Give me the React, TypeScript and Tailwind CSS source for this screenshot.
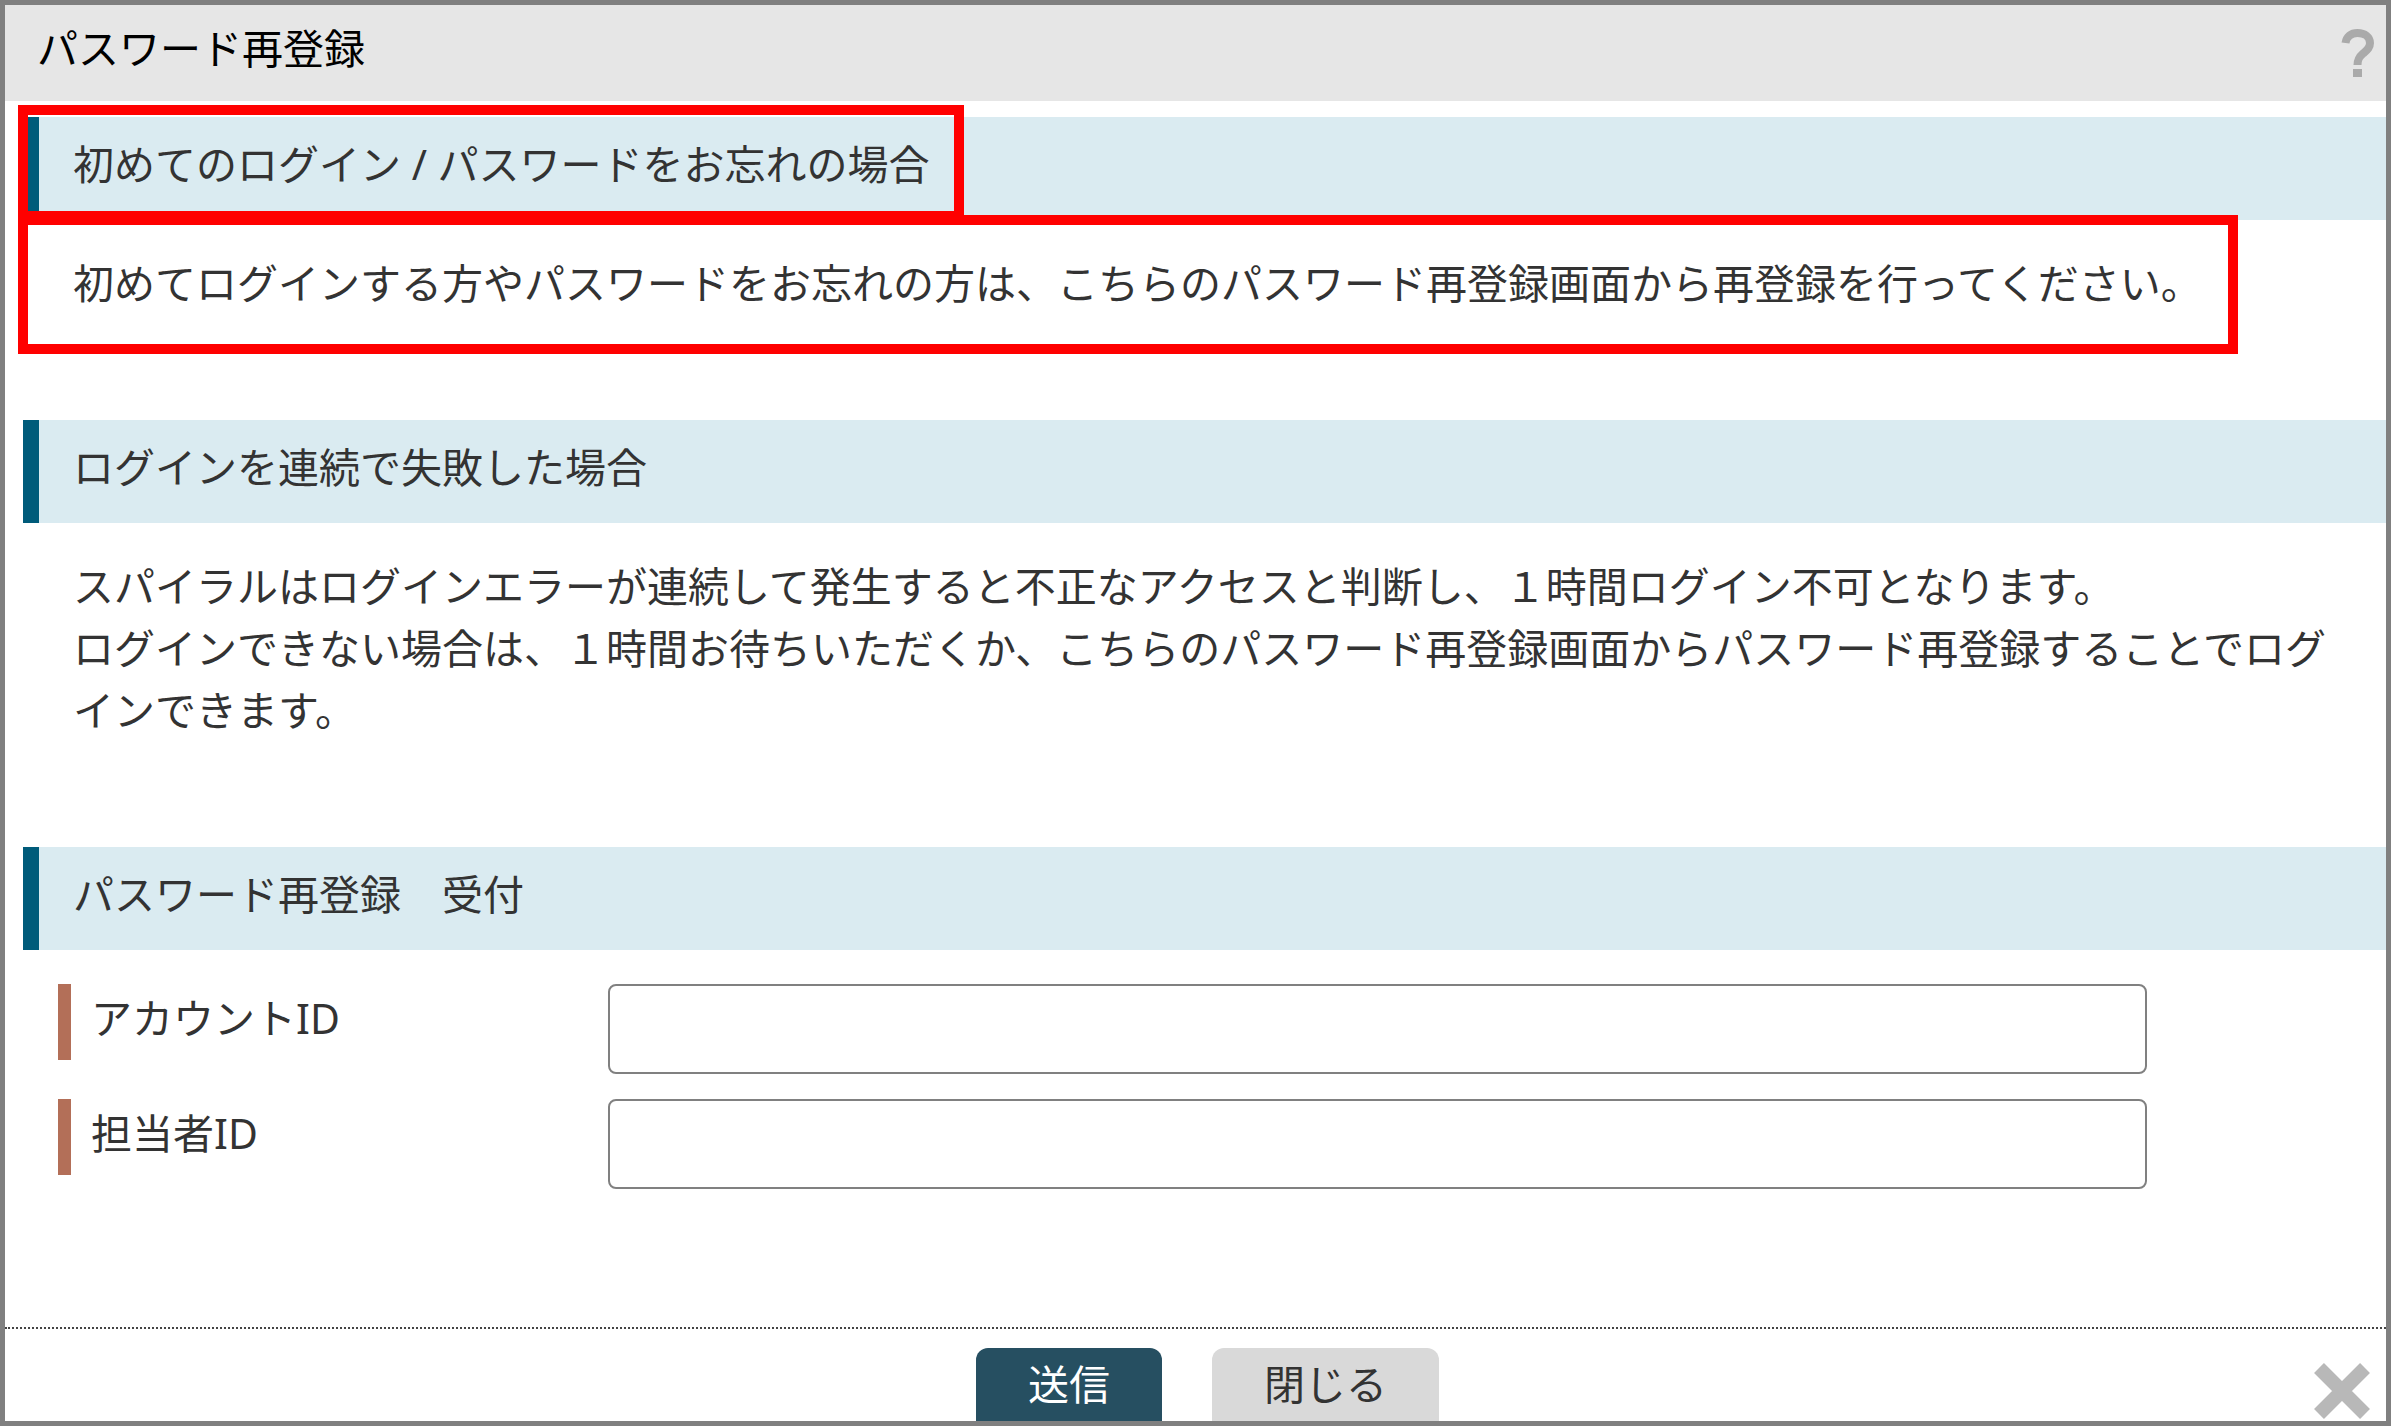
import { useState, type FormEvent, type ReactNode } from 'react';

function HelpIcon() {
  return (
    <svg width="36" height="50" viewBox="0 0 36 50" fill="none">
      <path
        d="M5.5 15C6.5 8.5 11 5 17.5 5C25 5 30 9 30 15C30 20.5 26.5 22.5 23 25.5C19.5 28.5 17.5 31 17.5 37"
        stroke="currentColor"
        strokeWidth="8"
      />
      <rect x="13" y="41" width="9" height="8" fill="currentColor" />
    </svg>
  );
}

function CloseIcon() {
  return (
    <svg width="56" height="56" viewBox="0 0 56 56" stroke="currentColor" strokeWidth="14">
      <path d="M5 5L51 51M51 5L5 51" />
    </svg>
  );
}

function SectionTitle({ children }: { children: ReactNode }) {
  return (
    <h2 className="h-[103px] border-l-[16px] border-[#005b7a] bg-[#daebf1] pl-[34px] pt-4 leading-[62px]">
      {children}
    </h2>
  );
}

function SectionBody({ children }: { children: ReactNode }) {
  return <div className="pt-8 pr-8 pb-[106px] pl-[50px] leading-[62px]">{children}</div>;
}

interface FieldProps {
  id: string;
  label: string;
  value: string;
  onChange: (value: string) => void;
}

function Field({ id, label, value, onChange }: FieldProps) {
  return (
    <div className="flex items-start">
      <label
        htmlFor={id}
        className="h-[76px] w-[550px] shrink-0 border-l-[13px] border-[#b36f58] pl-5 leading-[68px]"
      >
        {label}
      </label>
      <input
        id={id}
        type="text"
        value={value}
        onChange={(e) => onChange(e.target.value)}
        className="h-[90px] min-w-0 flex-1 rounded-lg border-2 border-[#808080] bg-white px-4"
      />
    </div>
  );
}

export default function App() {
  const [accountId, setAccountId] = useState('');
  const [staffId, setStaffId] = useState('');

  const handleSubmit = (e: FormEvent) => {
    e.preventDefault();
  };

  return (
    <form
      onSubmit={handleSubmit}
      className="flex min-h-screen flex-col border-[5px] border-[#808080] bg-white font-['Noto_Sans','Noto_Sans_CJK_JP',sans-serif] text-[41px] text-[#333]"
    >
      <header className="flex h-24 items-start justify-between bg-[#e6e6e6] pt-3 pr-[10px] pl-8">
        <h1 className="leading-[62px] text-black">パスワード再登録</h1>
        <button type="button" aria-label="ヘルプ" className="pt-[11px] text-[#aaa]">
          <HelpIcon />
        </button>
      </header>

      <main className="flex-1 pt-4 pl-[18px]">
        <section className="relative">
          <SectionTitle>初めてのログイン / パスワードをお忘れの場合</SectionTitle>
          <SectionBody>
            <p>
              初めてログインする方やパスワードをお忘れの方は、こちらのパスワード再登録画面から再登録を行ってください。
            </p>
          </SectionBody>
          {/* Highlight frames over the title and the message */}
          <div className="pointer-events-none absolute -top-3 -left-[5px] h-[116px] w-[946px] border-[10px] border-[#f00]" />
          <div className="pointer-events-none absolute top-[98px] right-[148px] -left-[5px] h-[139px] border-[10px] border-[#f00]" />
        </section>

        <section>
          <SectionTitle>ログインを連続で失敗した場合</SectionTitle>
          <SectionBody>
            <p>スパイラルはログインエラーが連続して発生すると不正なアクセスと判断し、１時間ログイン不可となります。</p>
            <p>
              ログインできない場合は、１時間お待ちいただくか、こちらのパスワード再登録画面からパスワード再登録することでログインできます。
            </p>
          </SectionBody>
        </section>

        <section>
          <SectionTitle>パスワード再登録　受付</SectionTitle>
          <div className="flex flex-col gap-[25px] pt-[34px] pr-[239px] pl-[35px]">
            <Field id="account-id" label="アカウントID" value={accountId} onChange={setAccountId} />
            <Field id="staff-id" label="担当者ID" value={staffId} onChange={setStaffId} />
          </div>
        </section>
      </main>

      <footer className="relative flex justify-center gap-[50px] border-t-2 border-dotted border-[#444] pt-[19px] pl-6">
        <button
          type="submit"
          className="h-[73px] rounded-t-xl bg-[#264f61] px-[52px] leading-[73px] text-white"
        >
          送信
        </button>
        <button type="button" className="h-[73px] rounded-t-xl bg-[#d9d9d9] px-[52px] leading-[73px]">
          閉じる
        </button>
        <button type="button" aria-label="閉じる" className="absolute right-4 bottom-[2px] text-[#b8b8b8]">
          <CloseIcon />
        </button>
      </footer>
    </form>
  );
}
